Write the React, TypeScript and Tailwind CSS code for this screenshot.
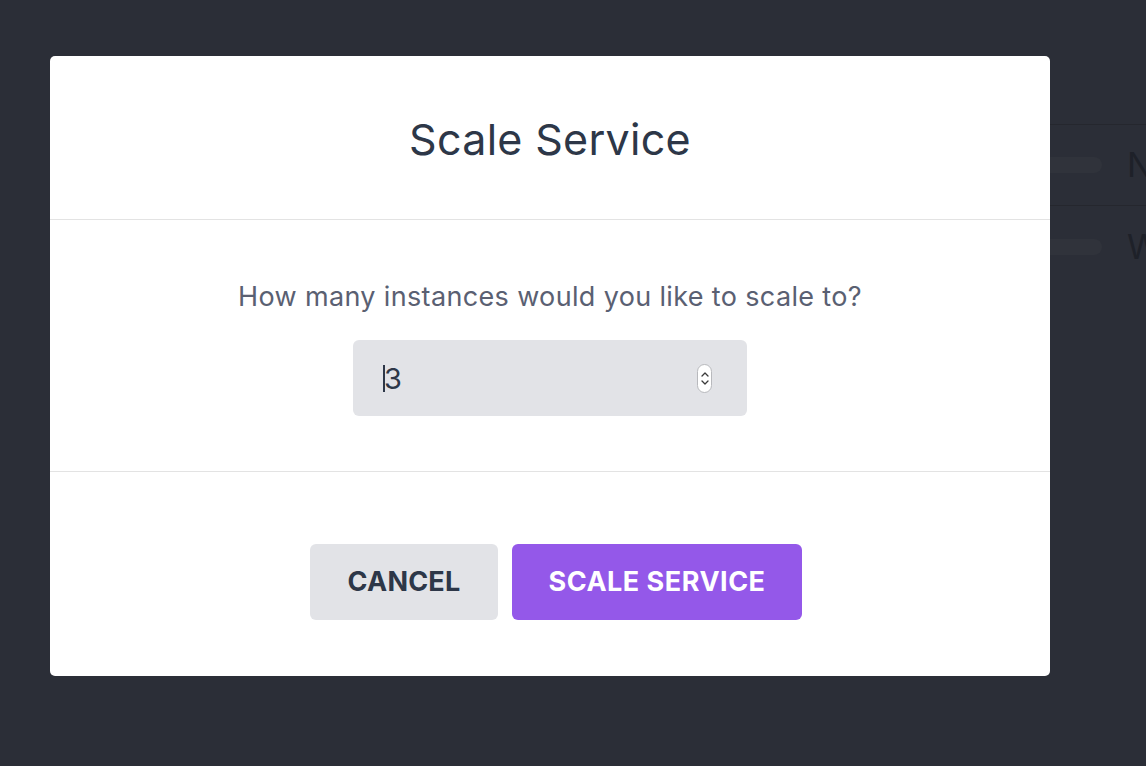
import { useState } from 'react';

// page behind the overlay, only its right edge shows
const BackgroundTable = () => {
  return (
    <div className="pt-[69px] pl-[620px] text-[#1e2129]">
      <div className="h-[56px] border-b border-[#25272e] flex items-center">
        <span className="shrink-0 ml-[418px] text-[30px]">)</span>
      </div>
      <div className="h-[81px] border-b border-[#25272e] flex items-center">
        <div className="shrink-0 ml-[420px] w-[62px] h-[16px] rounded-full bg-[#30333b]" />
        <span className="shrink-0 ml-[25px] text-[34px] leading-none">N</span>
      </div>
      <div className="h-[81px] flex items-center">
        <div className="shrink-0 ml-[420px] w-[62px] h-[16px] rounded-full bg-[#30333b]" />
        <span className="shrink-0 ml-[25px] text-[34px] leading-none">W</span>
      </div>
    </div>
  );
};

const Spinner = () => (
  <div className="w-[15px] h-[29px] rounded-full bg-white border border-[#b8b9bd] flex flex-col items-center justify-center gap-[3px]">
    <svg width="8" height="5" viewBox="0 0 8 5" fill="none">
      <path d="M1 4L4 1L7 4" stroke="#3a3a3a" strokeWidth="1.3" strokeLinecap="round" strokeLinejoin="round" />
    </svg>
    <svg width="8" height="5" viewBox="0 0 8 5" fill="none">
      <path d="M1 1L4 4L7 1" stroke="#3a3a3a" strokeWidth="1.3" strokeLinecap="round" strokeLinejoin="round" />
    </svg>
  </div>
);

const ScaleModal = () => {
  const [count] = useState(3);

  return (
    <div className="absolute left-[50px] top-[56px] w-[1000px] bg-white rounded-[5px] flex flex-col">
      <div className="h-[164px] flex items-center justify-center border-b border-[#e3e3e3]">
        <h1 className="text-[43px] leading-none text-[#2d3748] pt-[4px] tracking-[0.3px]">Scale Service</h1>
      </div>

      <div className="h-[252px] flex flex-col items-center pt-[61px] border-b border-[#e3e3e3]">
        <p className="text-[27px] leading-[32px] text-[#5a6072] tracking-[0.35px]">
          How many instances would you like to scale to?
        </p>
        <div className="mt-[27px] w-[394px] h-[76px] rounded-[6px] bg-[#e2e3e7] flex items-center justify-between pl-[30px] pr-[35px]">
          <div className="flex items-center">
            <div className="w-[2px] h-[27px] bg-[#2d3748]" />
            <span className="text-[29px] text-[#2d3748] leading-none -ml-[1px]">{count}</span>
          </div>
          <Spinner />
        </div>
      </div>

      <div className="flex justify-center gap-[14px] pt-[72px] pb-[56px] pl-3">
        <button className="w-[188px] h-[76px] rounded-[6px] bg-[#e2e3e7] text-[#2d3748] text-[27px] font-bold tracking-[0.2px]">
          CANCEL
        </button>
        <button className="w-[290px] h-[76px] rounded-[6px] bg-[#9458e9] text-white text-[27px] font-bold tracking-[0.5px]">
          SCALE SERVICE
        </button>
      </div>
    </div>
  );
};

export default function App() {
  return (
    <div className="relative h-[766px] overflow-hidden bg-[#2b2e37] font-['Inter',sans-serif]">
      <BackgroundTable />
      <ScaleModal />
    </div>
  );
}
